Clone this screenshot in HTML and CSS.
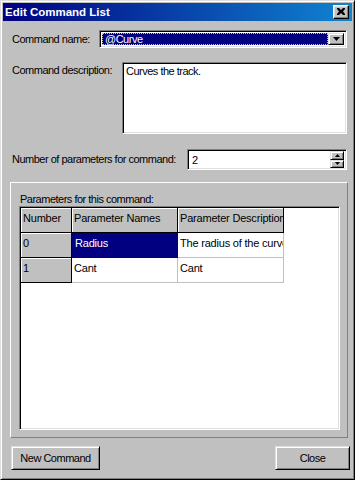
FILE: index.html
```html
<!DOCTYPE html>
<html>
<head>
<meta charset="utf-8">
<link rel="stylesheet" href="styles.css">
</head>
<body>
<div class="window">
  <div class="titlebar">
    <span class="title">Edit Command List</span>
    <span class="cap-btn">
      <svg width="8" height="7" viewBox="0 0 8 7"><path d="M0 0h2l2 2 2-2h2v1L6 3.5 8 6v1H6L4 5 2 7H0V6l2-2.5L0 1z" fill="#000"/></svg>
    </span>
  </div>
  <div class="body">
    <div class="row row-name">
      <span class="label">Command name:</span>
      <div class="combo sunken">
        <div class="combo-value"><span>@Curve</span></div>
        <div class="drop-btn raised">
          <svg width="7" height="4" viewBox="0 0 7 4"><path d="M0 0h7L3.5 4z" fill="#000"/></svg>
        </div>
      </div>
    </div>
    <div class="row row-desc">
      <span class="label">Command description:</span>
      <div class="textarea sunken">Curves the track.</div>
    </div>
    <div class="row row-num">
      <span class="label">Number of parameters for command:</span>
      <div class="spin sunken">
        <span class="spin-value">2</span>
        <div class="spin-btns">
          <div class="spin-btn raised"><svg width="5" height="3" viewBox="0 0 5 3"><path d="M2.5 0L5 3H0z" fill="#000"/></svg></div>
          <div class="spin-btn raised"><svg width="5" height="3" viewBox="0 0 5 3"><path d="M0 0h5L2.5 3z" fill="#000"/></svg></div>
        </div>
      </div>
    </div>
    <div class="group">
      <div class="group-label">Parameters for this command:</div>
      <div class="grid">
        <table>
          <colgroup><col class="c-num"><col class="c-name"><col class="c-desc"></colgroup>
          <tr><th>Number</th><th>Parameter Names</th><th>Parameter Description</th></tr>
          <tr><th>0</th><td class="sel">Radius</td><td>The radius of the curve</td></tr>
          <tr><th>1</th><td>Cant</td><td>Cant</td></tr>
        </table>
      </div>
    </div>
    <div class="buttons">
      <div class="btn raised btn-new">New Command</div>
      <div class="btn raised btn-close">Close</div>
    </div>
  </div>
</div>
</body>
</html>
```
FILE: styles.css
```css
html, body {
  margin: 0;
  padding: 0;
  background: #c0c0c0;
}
body {
  font-family: "Liberation Sans", Arial, sans-serif;
  font-size: 11px;
  letter-spacing: -0.5px;
  color: #000;
}
.window {
  width: 355px;
  height: 480px;
  box-sizing: border-box;
  border: 1px solid;
  border-color: #dfdfdf #000 #000 #dfdfdf;
  box-shadow: inset 1px 1px #fff, inset -1px -1px #808080;
  padding: 2px;
  background: #c0c0c0;
  display: flex;
  flex-direction: column;
}
.titlebar {
  height: 18px;
  background: linear-gradient(to right, #000080, #1084d0);
  display: flex;
  align-items: center;
  padding-left: 2px;
  padding-right: 3px;
}
.title {
  color: #fff;
  font-weight: bold;
  font-size: 11.5px;
  letter-spacing: 0;
  flex: 1;
}
.cap-btn {
  width: 16px;
  height: 14px;
  box-sizing: border-box;
  background: #c0c0c0;
  border: 1px solid;
  border-color: #fff #000 #000 #fff;
  box-shadow: inset -1px -1px #808080, inset 1px 1px #dfdfdf;
  display: flex;
  align-items: center;
  justify-content: center;
  padding: 0 1px 1px 0;
}
.raised {
  box-sizing: border-box;
  background: #c0c0c0;
  border: 1px solid;
  border-color: #dfdfdf #000 #000 #dfdfdf;
  box-shadow: inset 1px 1px #fff, inset -1px -1px #808080;
}
.sunken {
  box-sizing: border-box;
  border: 1px solid;
  border-color: #808080 #fff #fff #808080;
  box-shadow: inset 1px 1px #000, inset -1px -1px #dfdfdf;
  background: #fff;
}
.body {
  display: flex;
  flex-direction: column;
  flex: 1;
}
.row {
  display: flex;
  padding-left: 9px;
  padding-right: 5px;
}
.label {
  line-height: 13px;
}
.row-name {
  margin-top: 9px;
  align-items: center;
}
.combo {
  margin-left: auto;
  width: 248px;
  height: 18px;
  padding: 2px;
  display: flex;
}
.combo-value {
  flex: 1;
  background: #000080;
  color: #fff;
  outline: 1px dotted #c0c0c0;
  outline-offset: -1px;
  display: flex;
  align-items: center;
  padding-left: 3px;
}
.drop-btn {
  width: 16px;
  display: flex;
  align-items: center;
  justify-content: center;
}
.row-desc {
  margin-top: 14px;
  align-items: flex-start;
}
.row-desc .label {
  padding-top: 2px;
}
.textarea {
  margin-left: auto;
  width: 225px;
  height: 72px;
  padding: 2px 3px;
  line-height: 13px;
}
.row-num {
  margin-top: 15px;
  align-items: center;
}
.spin {
  margin-left: auto;
  width: 160px;
  height: 21px;
  padding: 2px;
  display: flex;
  align-items: center;
}
.spin-value {
  flex: 1;
  padding-left: 2px;
}
.spin-btns {
  display: flex;
  flex-direction: column;
  width: 14px;
  height: 17px;
}
.spin-btn {
  flex: 1;
  display: flex;
  align-items: center;
  justify-content: center;
}
.group {
  margin-top: 12px;
  margin-left: 7px;
  width: 338px;
  height: 256px;
  box-sizing: border-box;
  border: 1px solid;
  border-color: #fff #808080 #808080 #fff;
  padding: 10px 7px 0 8px;
}
.group-label {
  line-height: 13px;
  padding-left: 1px;
}
.grid {
  width: 321px;
  height: 224px;
  box-sizing: border-box;
  border: 1px solid;
  border-color: #808080 #fff #fff #808080;
  box-shadow: inset 1px 1px #000, inset -1px -1px #dfdfdf;
  background: #fff;
  padding: 1px;
  letter-spacing: -0.2px;
}
table {
  border-collapse: separate;
  border-spacing: 0;
  table-layout: fixed;
  width: 263px;
}
col.c-num { width: 51px; }
col.c-name { width: 106px; }
col.c-desc { width: 106px; }
th, td {
  height: 25px;
  box-sizing: border-box;
  padding: 0 0 4px 2px;
  text-align: left;
  vertical-align: middle;
  font-weight: normal;
  white-space: nowrap;
  overflow: hidden;
  text-overflow: clip;
  line-height: 13px;
}
th {
  background: #c0c0c0;
  border-right: 1px solid #000;
  border-bottom: 1px solid #000;
  box-shadow: inset 1px 1px #fff;
}
td {
  border-right: 1px solid #c0c0c0;
  border-bottom: 1px solid #c0c0c0;
}
td.sel {
  background: #000080;
  color: #fff;
  border-color: #000080;
  padding-left: 3px;
}
.buttons {
  display: flex;
  margin-top: 8px;
  padding-left: 8px;
  padding-right: 2px;
}
.btn {
  height: 24px;
  display: flex;
  align-items: center;
  justify-content: center;
}
.btn-new {
  width: 89px;
}
.btn-close {
  width: 75px;
  margin-left: auto;
}
```
